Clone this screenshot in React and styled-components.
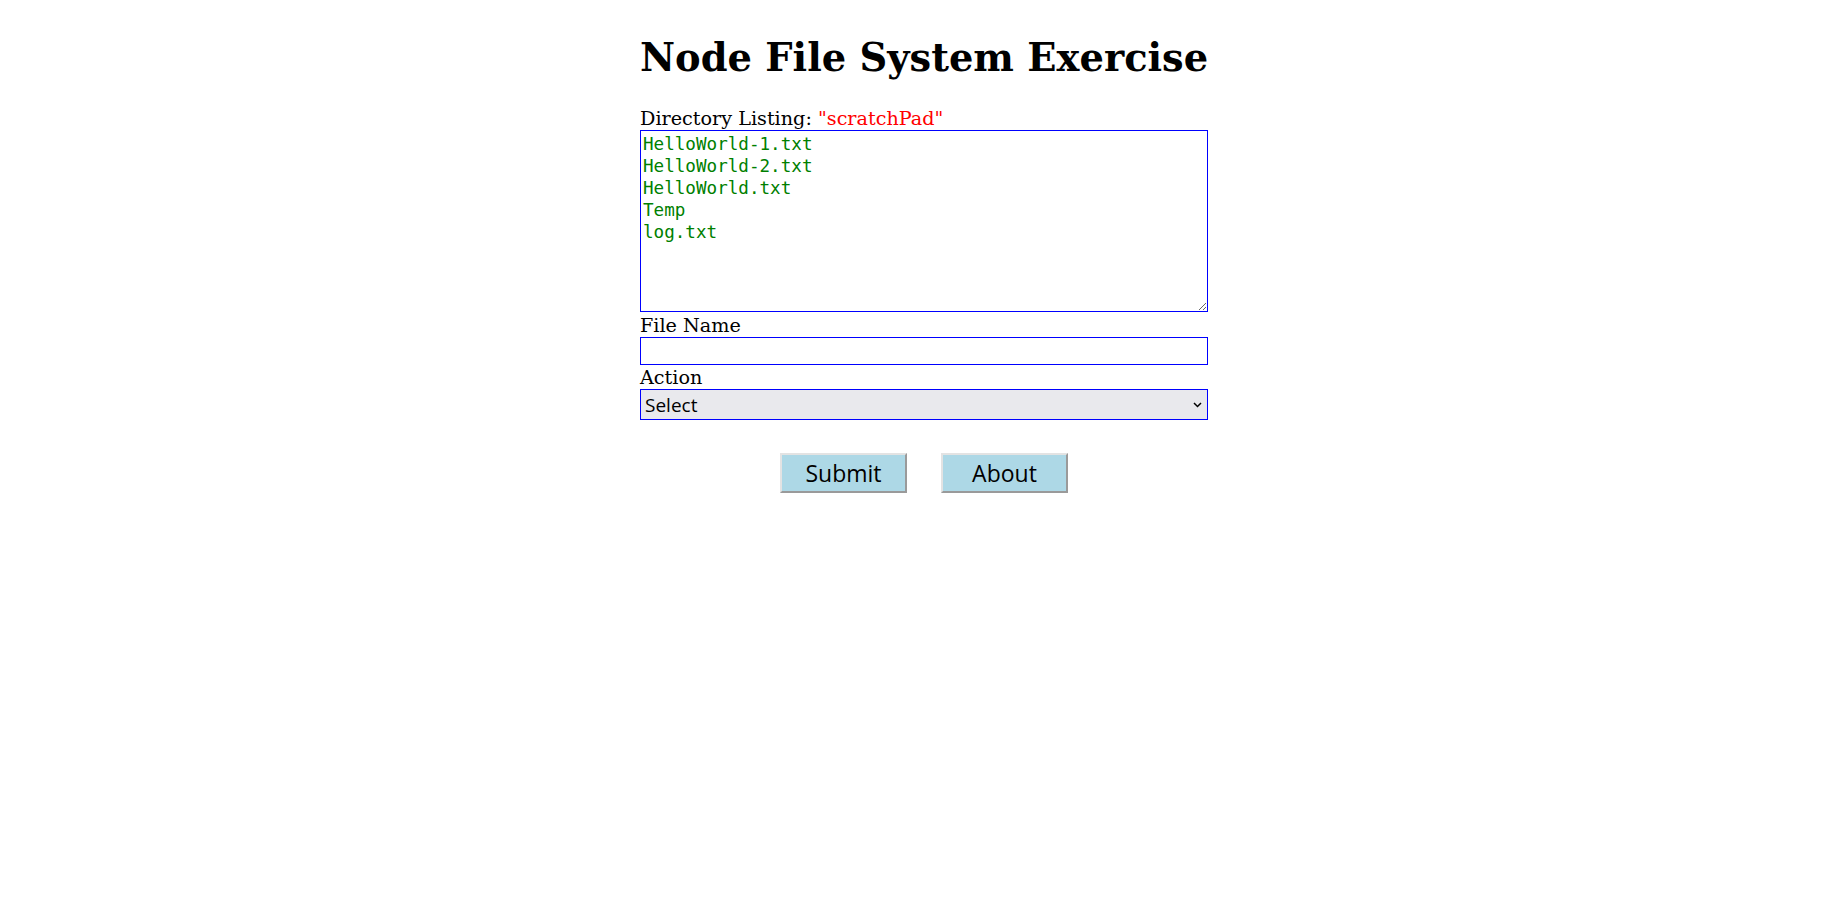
import React from "react";
import styled, { createGlobalStyle } from "styled-components";

const Global = createGlobalStyle`
  html, body { margin: 0; padding: 0; background: #ffffff; }
  body { font-family: "DejaVu Serif", serif; color: #000000; }
  * { box-sizing: border-box; }
`;

const Page = styled.main`
  display: flex;
  justify-content: center;
`;

const Form = styled.form`
  width: 568px;
  display: flex;
  flex-direction: column;
`;

const Title = styled.h1`
  margin: 35px 0 0;
  font-family: "DejaVu Serif", serif;
  font-weight: bold;
  font-size: 38.4px;
  line-height: 45px;
  text-align: center;
  white-space: nowrap;
`;

const Label = styled.label`
  display: block;
  margin-top: ${(p) => p.$top ?? 3}px;
  font-family: "DejaVu Serif", serif;
  font-size: 19.2px;
  line-height: 22px;
`;

const DirName = styled.span`
  color: #ff0000;
`;

const Listing = styled.textarea`
  display: block;
  margin: 0;
  width: 100%;
  height: 182px;
  padding: 2px 2px;
  border: 1px solid #0000ff;
  border-radius: 0;
  outline: none;
  color: #008000;
  font-family: "DejaVu Sans Mono", monospace;
  font-size: 17.6px;
  line-height: 22px;
  resize: both;
  background: #ffffff;
`;

const TextInput = styled.input`
  display: block;
  margin: 0;
  width: 100%;
  height: 28px;
  padding: 2px 4px;
  border: 1px solid #0000ff;
  border-radius: 0;
  outline: none;
  font-family: "Open Sans", sans-serif;
  font-size: 17px;
  background: #ffffff;
`;

const SelectWrap = styled.div`
  position: relative;
  height: 31px;
`;

const Select = styled.select`
  appearance: none;
  -webkit-appearance: none;
  display: block;
  width: 100%;
  height: 31px;
  padding: 0 24px 0 4px;
  border: 1px solid #0000ff;
  border-radius: 0;
  outline: none;
  background: #e9e9ed;
  color: #000000;
  font-family: "Open Sans", sans-serif;
  font-size: 19px;
`;

const Chevron = styled.svg`
  position: absolute;
  right: 6px;
  top: 13px;
  width: 9px;
  height: 6px;
  pointer-events: none;
`;

const Buttons = styled.div`
  display: flex;
  justify-content: center;
  gap: 34px;
  margin-top: 33px;
`;

const Button = styled.button`
  width: 127px;
  height: 40px;
  padding: 0;
  background: #add8e6;
  border-style: solid;
  border-width: 2px;
  border-color: #e3e3e3 #9a9a9a #9a9a9a #e3e3e3;
  border-radius: 0;
  font-family: "Open Sans", sans-serif;
  font-size: 23px;
  color: #000000;
  cursor: pointer;
`;

const files = ["HelloWorld-1.txt", "HelloWorld-2.txt", "HelloWorld.txt", "Temp", "log.txt"];

export default function App() {
  return (
    <>
      <Global />
      <Page>
        <Form onSubmit={(e) => e.preventDefault()}>
          <Title>Node File System Exercise</Title>
          <Label $top={28} htmlFor="listing">
            Directory Listing: <DirName>"scratchPad"</DirName>
          </Label>
          <Listing id="listing" readOnly value={files.join("\n")} />
          <Label htmlFor="fileName">File Name</Label>
          <TextInput id="fileName" type="text" />
          <Label $top={2} htmlFor="action">Action</Label>
          <SelectWrap>
            <Select id="action" defaultValue="">
              <option value="">Select</option>
              <option value="read">Read</option>
              <option value="write">Write</option>
              <option value="delete">Delete</option>
            </Select>
            <Chevron viewBox="0 0 9 6">
              <path d="M1 1 L4.5 4.5 L8 1" fill="none" stroke="#000" strokeWidth="1.5" />
            </Chevron>
          </SelectWrap>
          <Buttons>
            <Button type="submit">Submit</Button>
            <Button type="button">About</Button>
          </Buttons>
        </Form>
      </Page>
    </>
  );
}
